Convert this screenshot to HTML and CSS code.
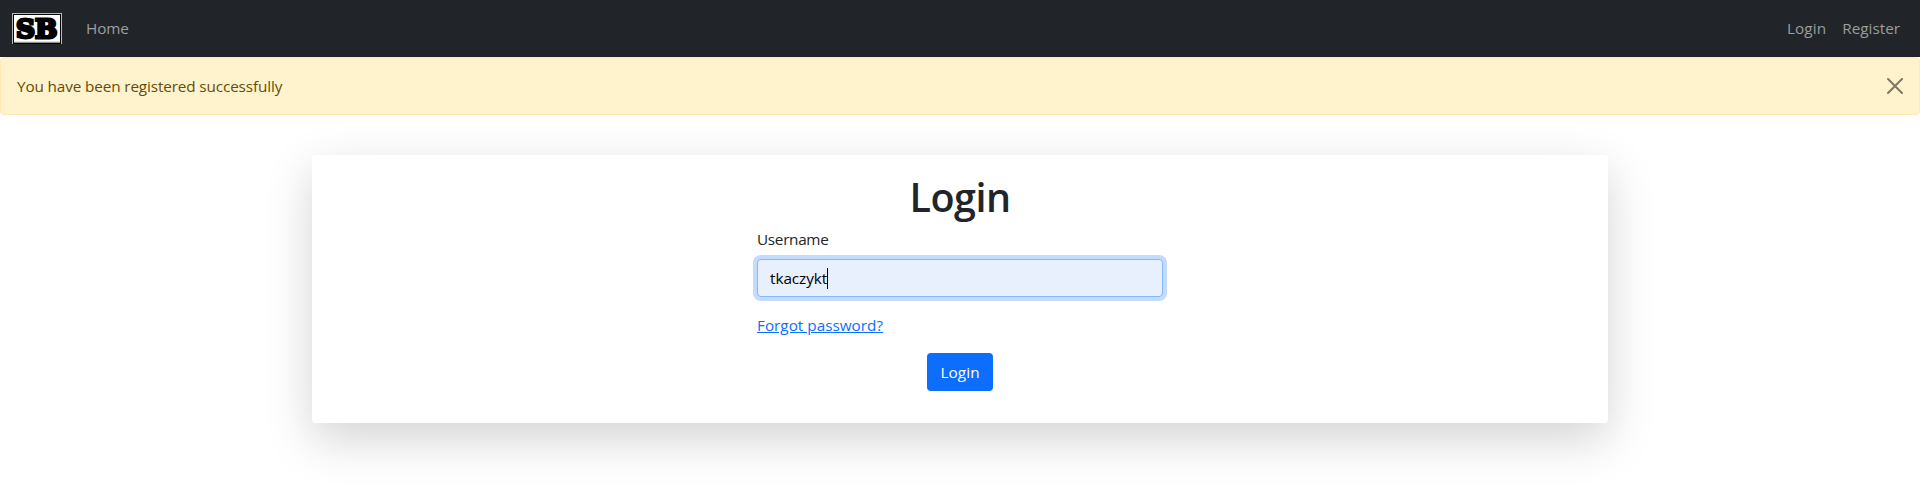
FILE: index.html
```html
<!DOCTYPE html>
<html lang="en">
<head>
<meta charset="utf-8">
<title>Login</title>
<link rel="stylesheet" href="styles.css">
</head>
<body>
<nav class="navbar">
  <a class="brand" href="#">
    <svg class="logo" width="50" height="31" viewBox="0 0 50 31" role="img" aria-label="SB">
      <rect width="50" height="31" fill="#b9babb"/>
      <rect x="1" y="1" width="48" height="30" fill="#050505"/>
      <rect x="2" y="2" width="46" height="27.5" fill="#fff"/>
      <rect x="2" y="28.7" width="46" height="1" fill="#999"/>
      <text class="logo-text" x="4" y="25.4" textLength="41.4" lengthAdjust="spacingAndGlyphs">SB</text>
    </svg>
  </a>
  <a class="nav-link home" href="#">Home</a>
  <div class="nav-end">
    <a class="nav-link nav-login" href="#">Login</a>
    <a class="nav-link register" href="#">Register</a>
  </div>
</nav>
<div class="alert" role="alert">
  <span class="alert-text">You have been registered successfully</span>
  <button class="close" type="button" aria-label="Close">
    <svg width="16" height="16" viewBox="0 0 16 16"><path fill="#000" d="M.293.293a1 1 0 011.414 0L8 6.586 14.293.293a1 1 0 111.414 1.414L9.414 8l6.293 6.293a1 1 0 01-1.414 1.414L8 9.414l-6.293 6.293a1 1 0 01-1.414-1.414L6.586 8 .293 1.707a1 1 0 010-1.414z"/></svg>
  </button>
</div>
<main class="card">
  <h1 class="title"><span>Login</span></h1>
  <form class="form">
    <label class="label"><span>Username</span></label>
    <div class="input"><span class="value">tkaczykt</span><span class="caret"></span></div>
    <div class="forgot"><a class="link" href="#">Forgot password?</a></div>
    <button class="btn" type="button">Login</button>
  </form>
</main>
</body>
</html>
```
FILE: styles.css
```css
* { box-sizing: border-box; }
body {
  margin: 0;
  min-height: 496px;
  background: #fff;
  color: #212529;
  font: 15.3px/24px "Open Sans", "Noto Sans", sans-serif;
}
.navbar {
  display: flex;
  align-items: center;
  height: 57px;
  padding: 0 20px 0 12px;
  background: #212529;
}
.brand { display: flex; margin-right: 24px; }
.logo { display: block; }
.logo-text {
  font: bold 26px "DejaVu Serif", serif;
  fill: #000;
  stroke: #000;
  stroke-width: 2.8px;
}
.nav-link {
  padding-bottom: 2px;
  color: #9b9d9e;
  text-decoration: none;
}
.home { letter-spacing: -.15px; }
.nav-login { letter-spacing: .1px; }
.nav-end { display: flex; gap: 16px; margin-left: auto; }
.alert {
  display: flex;
  justify-content: space-between;
  height: 58px;
  padding: 16px;
  border: 1px solid #ffecb5;
  border-radius: 4px;
  background: #fff3cd;
  color: #664d03;
}
.alert-text { letter-spacing: -.13px; }
.close {
  width: 16px;
  height: 16px;
  margin: 4px 0 0;
  padding: 0;
  border: 0;
  background: none;
  opacity: .5;
}
.close svg { display: block; }
.card {
  width: 1296px;
  height: 268px;
  margin: 40px auto 0;
  padding: 18px 0 30px;
  border-radius: 4px;
  background: #fff;
  box-shadow: 0 16px 48px rgba(0, 0, 0, .175);
}
.title {
  margin: 0 0 6px;
  font-size: 39.5px;
  font-weight: 600;
  line-height: 48px;
  text-align: center;
  letter-spacing: -.5px;
}
.form {
  display: flex;
  flex-direction: column;
  width: 406px;
  margin: 0 auto;
}
.label { margin-bottom: 8px; letter-spacing: -.3px; }
.input {
  display: flex;
  align-items: center;
  height: 38px;
  padding: 0 12px;
  border: 1px solid #86b7fe;
  border-radius: 4px;
  background: #e8f0fe;
  box-shadow: 0 0 0 4px rgba(13, 110, 253, .25);
  color: #000;
}
.value { letter-spacing: -.05px; }
.caret { width: 1px; height: 21px; background: #000; }
.forgot { margin: 16px 0; }
.link { color: #0d6efd; }
.btn {
  align-self: center;
  width: 66px;
  height: 38px;
  padding: 0;
  border: 0;
  border-radius: 4px;
  background: #0d6efd;
  color: #fff;
  font: inherit;
  letter-spacing: .1px;
}
```
